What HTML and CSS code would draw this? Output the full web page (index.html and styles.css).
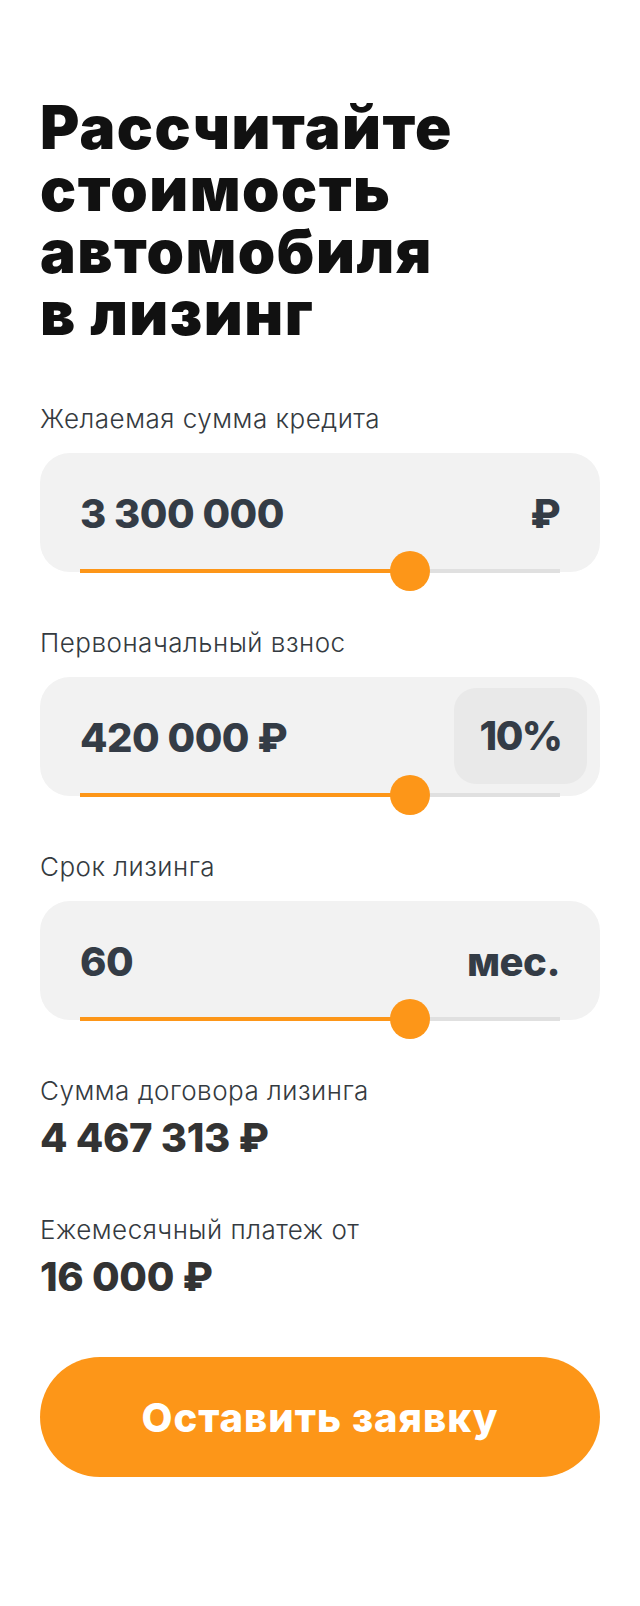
FILE: index.html
```html
<!DOCTYPE html>
<html lang="ru">
<head>
<meta charset="utf-8">
<title>Лизинг</title>
<link rel="stylesheet" href="styles.css">
</head>
<body>
<main class="calc">
  <h1 class="title">
    <span class="title-line">Рассчитайте</span>
    <span class="title-line">стоимость</span>
    <span class="title-line">автомобиля</span>
    <span class="title-line">в лизинг</span>
  </h1>

  <div class="field">
    <div class="field-label">Желаемая сумма кредита</div>
    <div class="field-box">
      <div class="field-row">
        <span class="field-value">3 300 000</span>
        <span class="field-unit">₽</span>
      </div>
      <div class="slider">
        <div class="slider-fill" style="width:68.75%"></div>
        <div class="slider-thumb" style="left:68.75%"></div>
      </div>
    </div>
  </div>

  <div class="field">
    <div class="field-label">Первоначальный взнос</div>
    <div class="field-box">
      <div class="field-row">
        <span class="field-value">420 000 ₽</span>
        <span class="field-percent">10%</span>
      </div>
      <div class="slider">
        <div class="slider-fill" style="width:68.75%"></div>
        <div class="slider-thumb" style="left:68.75%"></div>
      </div>
    </div>
  </div>

  <div class="field">
    <div class="field-label">Срок лизинга</div>
    <div class="field-box">
      <div class="field-row">
        <span class="field-value">60</span>
        <span class="field-unit">мес.</span>
      </div>
      <div class="slider">
        <div class="slider-fill" style="width:68.75%"></div>
        <div class="slider-thumb" style="left:68.75%"></div>
      </div>
    </div>
  </div>

  <div class="result">
    <div class="result-label">Сумма договора лизинга</div>
    <div class="result-value">4 467 313 ₽</div>
  </div>

  <div class="result">
    <div class="result-label">Ежемесячный платеж от</div>
    <div class="result-value">16 000 ₽</div>
  </div>

  <button class="submit" type="button">Оставить заявку</button>
</main>
</body>
</html>
```

FILE: styles.css
```css
* { box-sizing: border-box; }

body {
  margin: 0;
  background: #ffffff;
  font-family: Inter, "Noto Sans", sans-serif;
}

.calc {
  padding: 96px 40px 0;
  display: flex;
  flex-direction: column;
}

.title {
  margin: 0 0 60px;
  font-size: 60px;
  line-height: 62px;
  font-weight: 900;
  color: #111111;
  letter-spacing: 1.5px;
  display: flex;
  flex-direction: column;
}

.title-line {
  display: block;
  height: 62px;
  white-space: nowrap;
}

.field + .field {
  margin-top: 56px;
}

.field-label,
.result-label {
  font-size: 26px;
  line-height: 30px;
  font-weight: 300;
  color: #343a40;
  letter-spacing: 0.5px;
}

.field-label {
  margin-bottom: 19px;
}

.field-box {
  height: 119px;
  background: #f2f2f2;
  border-radius: 30px;
  padding: 0 40px;
  display: flex;
  flex-direction: column;
}

.field-row {
  flex: 1;
  display: flex;
  align-items: center;
  justify-content: space-between;
  padding-top: 6px;
}

.field-value,
.field-unit,
.field-percent {
  font-size: 40px;
  line-height: 44px;
  font-weight: 800;
  color: #343c46;
  letter-spacing: -0.5px;
}

.field-percent {
  width: 133px;
  height: 96px;
  margin-right: -27px;
  margin-top: -5px;
  border-radius: 22px;
  background: #e9e9e9;
  display: flex;
  align-items: center;
  justify-content: center;
  letter-spacing: -1.5px;
}

.slider {
  position: relative;
  height: 4px;
  margin-bottom: -1px;
  background: #e0e0e0;
}

.slider-fill {
  height: 100%;
  background: #fd9618;
}

.slider-thumb {
  position: absolute;
  top: 50%;
  width: 40px;
  height: 40px;
  margin: -20px 0 0 -20px;
  border-radius: 50%;
  background: #fd9618;
}

.result {
  display: flex;
  flex-direction: column;
  gap: 10px;
}

.field + .result {
  margin-top: 56px;
}

.result + .result {
  margin-top: 55px;
}

.result-value {
  font-size: 40px;
  line-height: 44px;
  font-weight: 800;
  color: #333333;
  letter-spacing: -0.3px;
}

.submit {
  margin-top: 58px;
  height: 120px;
  border: 0;
  border-radius: 60px;
  background: #fd9618;
  color: #ffffff;
  font-family: Inter, "Noto Sans", sans-serif;
  font-size: 40px;
  font-weight: 800;
  letter-spacing: 1px;
  cursor: pointer;
}
```
